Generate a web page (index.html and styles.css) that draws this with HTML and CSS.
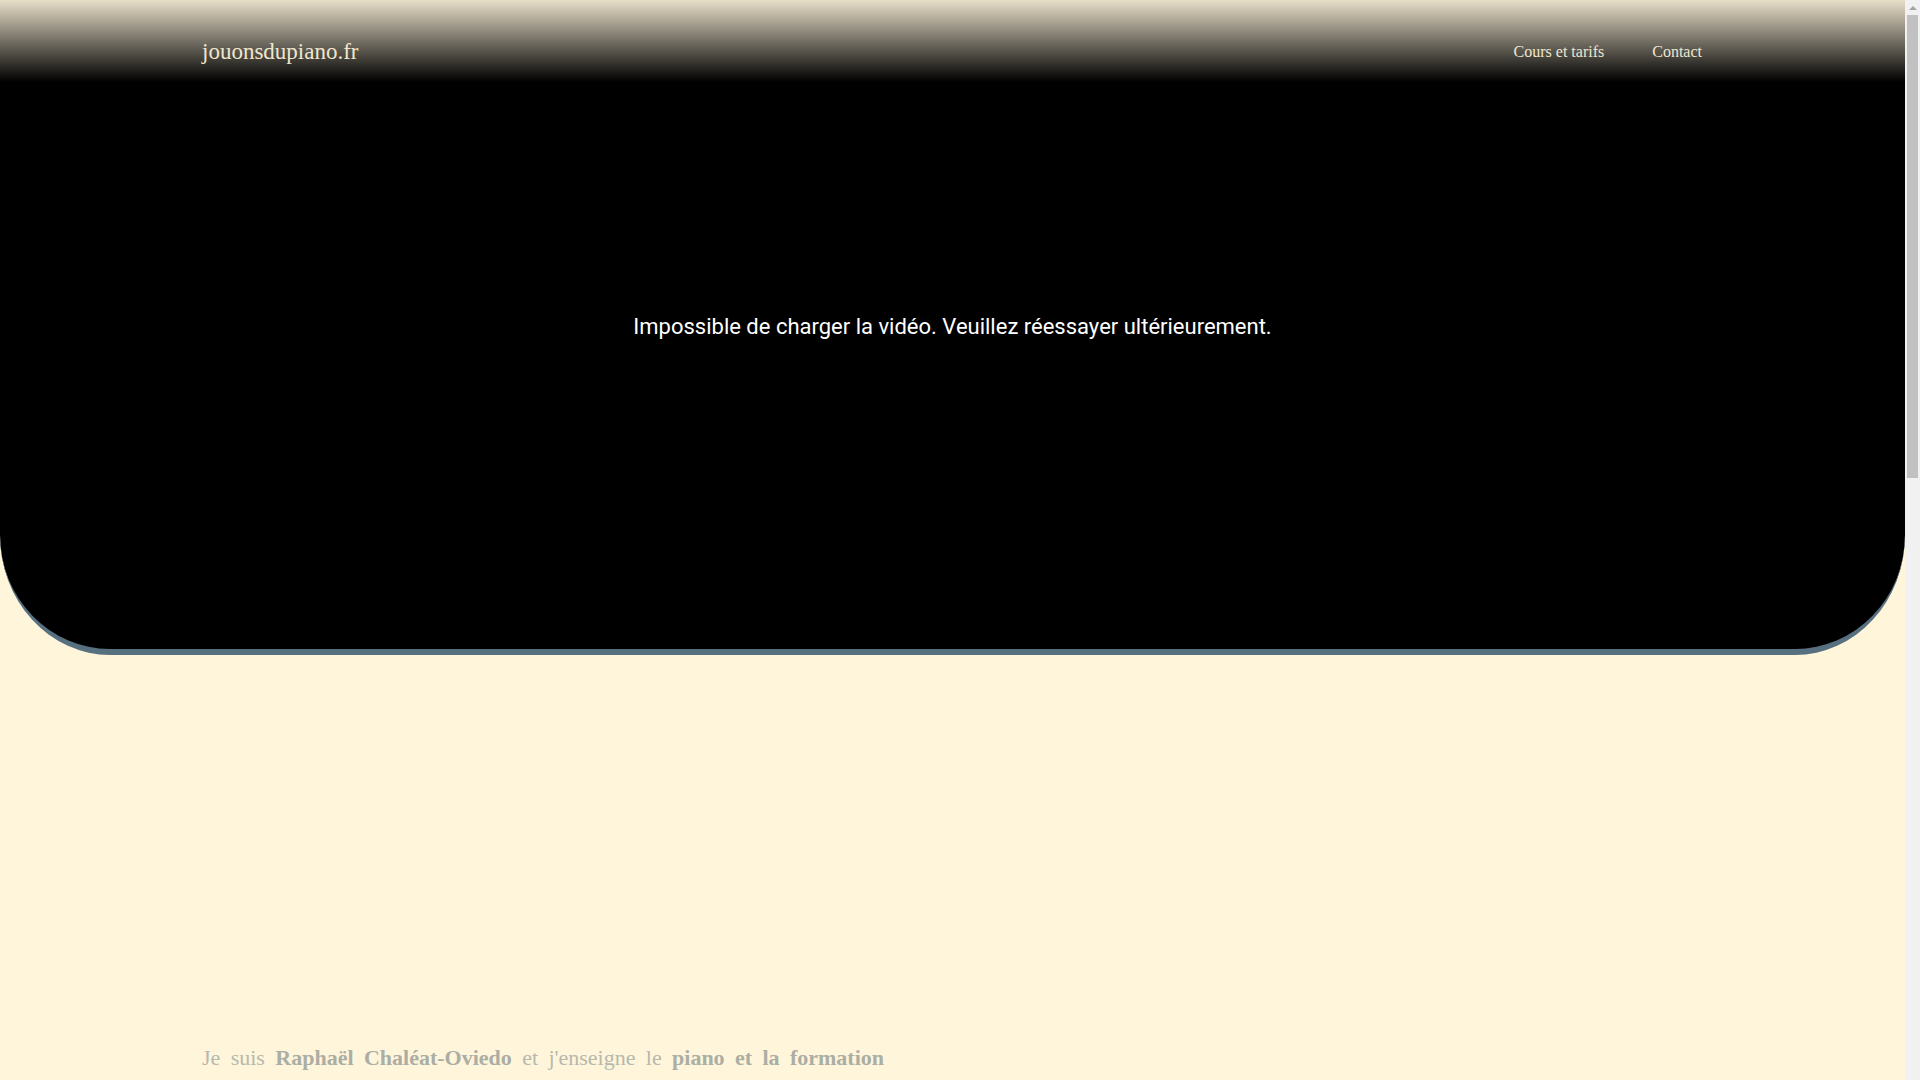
FILE: index.html
```html
<!DOCTYPE html>
<html lang="fr">
<head>
<meta charset="utf-8">
<title>jouonsdupiano.fr</title>
<link rel="stylesheet" href="styles.css">
</head>
<body>
<section class="hero">
  <header class="topbar">
    <a class="logo" href="#">jouonsdupiano.fr</a>
    <nav class="nav">
      <a href="#">Cours et tarifs</a>
      <a href="#">Contact</a>
    </nav>
  </header>
  <div class="video">
    <p class="video-error">Impossible de charger la vidéo. Veuillez réessayer ultérieurement.</p>
  </div>
</section>
<main class="content">
  <p class="intro">Je suis <strong>Raphaël Chaléat-Oviedo</strong> et j'enseigne le <strong>piano et la formation musicale</strong> à Paris, à domicile ou en ligne, pour les enfants comme pour les adultes, débutants ou confirmés. Mes cours s'adaptent à chaque élève, à ses envies et à son rythme, du répertoire classique aux musiques actuelles.</p>
  <div class="spacer"></div>
</main>
<div class="scrollbar" aria-hidden="true">
  <div class="scroll-arrow up"></div>
  <div class="scroll-thumb"></div>
</div>
</body>
</html>
```
FILE: styles.css
```css
html, body {
  margin: 0;
  padding: 0;
}
body {
  background: #fff5da;
  font-family: "Liberation Serif", "Times New Roman", serif;
  margin-right: 15px;
}
.hero {
  background: #000;
  height: 649px;
  border-bottom: 6px solid #56707f;
  border-radius: 0 0 110px 110px / 0 0 120px 120px;
  display: flex;
  flex-direction: column;
}
.topbar {
  height: 102px;
  flex: none;
  background: linear-gradient(to bottom, #e8dfc9 0px, #000 82px);
  display: flex;
  align-items: center;
  justify-content: space-between;
  padding: 0 203px 0 202px;
}
.logo {
  color: #efe6cd;
  text-decoration: none;
  font-size: 23px;
  padding-top: 1px;
}
.nav {
  display: flex;
  gap: 48px;
  padding-top: 2px;
}
.nav a {
  color: #efe6cd;
  text-decoration: none;
  font-size: 16px;
}
.video {
  flex: 1;
  display: flex;
  align-items: center;
  justify-content: center;
  margin-top: -102px;
}
.video-error {
  margin: 0;
  color: #fff;
  font-family: Roboto, "Liberation Sans", sans-serif;
  font-size: 22px;
  padding-top: 3px;
}
.content {
  padding: 0 202px;
}
.intro {
  width: 682px;
  margin: 386px 0 0;
  text-align: justify;
  font-size: 22px;
  line-height: 1.5;
  color: #b6b9ae;
}
.intro strong {
  color: #abaea4;
}
.spacer {
  height: 1300px;
}
.scrollbar {
  position: fixed;
  top: 0;
  right: 0;
  width: 15px;
  height: 100vh;
  background: #f1f1f1;
}
.scroll-arrow {
  height: 15px;
  display: flex;
  align-items: center;
  justify-content: center;
}
.scroll-arrow.up::before {
  content: "";
  border-left: 4px solid transparent;
  border-right: 4px solid transparent;
  border-bottom: 4px solid #a3a3a3;
}
.scroll-thumb {
  margin: 0 2px;
  height: 463px;
  background: #c1c1c1;
}
```
